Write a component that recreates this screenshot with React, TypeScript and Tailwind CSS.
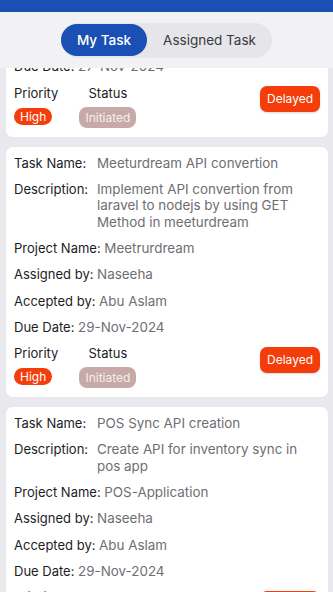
import React from "react";

type Task = {
  name: string;
  description: string;
  project: string;
  assignedBy: string;
  acceptedBy: string;
  dueDate: string;
};

const tasks: Task[] = [
  {
    name: "Meeturdream API integration",
    description: "Integrate profile API from laravel to nodejs by using POST Method in meeturdream",
    project: "Meetrurdream",
    assignedBy: "Naseeha",
    acceptedBy: "Abu Aslam",
    dueDate: "27-Nov-2024",
  },
  {
    name: "Meeturdream API convertion",
    description: "Implement API convertion from laravel to nodejs by using GET Method in meeturdream",
    project: "Meetrurdream",
    assignedBy: "Naseeha",
    acceptedBy: "Abu Aslam",
    dueDate: "29-Nov-2024",
  },
  {
    name: "POS Sync API creation",
    description: "Create API for inventory sync in pos app",
    project: "POS-Application",
    assignedBy: "Naseeha",
    acceptedBy: "Abu Aslam",
    dueDate: "29-Nov-2024",
  },
];

function Field({ label, value }: { label: string; value: string }) {
  return (
    <div className="leading-[17px]">
      <span className="text-[#1d1d1f]">{label}</span>{" "}
      <span className="text-[#6e6e73] text-[13.4px]">{value}</span>
    </div>
  );
}

function TaskCard({ task, first }: { task: Task; first?: boolean }) {
  return (
    <div
      className={`bg-white rounded-[7px] pt-[8px] pb-[9px] px-[8px] flex flex-col gap-[9.3px] ${
        first ? "-mt-[182px]" : ""
      }`}
    >
      <div className="flex leading-[17px]">
        <span className="w-[83px] shrink-0 text-[#1d1d1f]">Task Name:</span>
        <span className="text-[#6e6e73] text-[13.4px]">{task.name}</span>
      </div>
      <div className="flex leading-[16.6px]">
        <span className="w-[83px] shrink-0 text-[#1d1d1f]">Description:</span>
        <span className="text-[#6e6e73] text-[13.4px] pr-[14px]">{task.description}</span>
      </div>
      <Field label="Project Name:" value={task.project} />
      <Field label="Assigned by:" value={task.assignedBy} />
      <Field label="Accepted by:" value={task.acceptedBy} />
      <Field label="Due Date:" value={task.dueDate} />

      {/* priority / status / delay */}
      <div className="flex justify-between items-start">
        <div className="flex gap-[21px]">
          <div className="flex flex-col items-start gap-[6px]">
            <span className="leading-[17px] text-[#1d1d1f]">Priority</span>
            <span className="bg-[#f53d0b] text-white text-[12px] leading-[17px] rounded-full px-[6px]">
              High
            </span>
          </div>
          <div className="flex flex-col items-center gap-[5px]">
            <span className="leading-[17px] text-[#1d1d1f]">Status</span>
            <span className="bg-[#c7a9a8] text-[#f6eeee] text-[12px] leading-[21px] rounded-[8px] px-[6px]">
              Initiated
            </span>
          </div>
        </div>
        <span className="mt-[1.5px] bg-[#f53d0b] text-white text-[12px] leading-[26px] rounded-[7px] px-[7px] shadow-[0_1px_2px_rgba(0,0,0,0.15)]">
          Delayed
        </span>
      </div>
    </div>
  );
}

export default function App() {
  return (
    <div className="w-[333px] h-[592px] overflow-hidden bg-[#e9e9ed] flex flex-col font-['Inter',sans-serif] text-[13px]">
      <div className="h-[12px] bg-[#1a4fb3] shrink-0" />

      {/* tabs */}
      <div className="h-[56px] shrink-0 bg-[#f2f2f4] flex items-center justify-center relative z-10">
        <div className="w-[211px] h-[35px] flex items-center bg-[#e5e5ea] rounded-full">
          <button className="w-[86px] h-[32px] rounded-full bg-[#1a4fb3] text-white text-[13.5px] font-medium">
            My Task
          </button>
          <button className="flex-1 h-[32px] text-[#3a3a3c] text-[13.5px]">
            Assigned Task
          </button>
        </div>
      </div>

      {/* list */}
      <div className="flex-1 overflow-hidden pl-[6px] pr-[5px]">
        <div className="flex flex-col gap-[10px]">
          {tasks.map((t, i) => (
            <TaskCard key={i} task={t} first={i === 0} />
          ))}
        </div>
      </div>
    </div>
  );
}
